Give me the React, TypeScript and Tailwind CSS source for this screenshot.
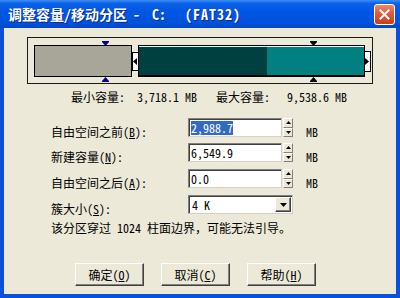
import React from "react";

const FONT = "font-['Noto_Sans_Mono_CJK_SC','Noto_Sans_CJK_SC',monospace]";

function Marker({ down, color, className }: { down: boolean; color: string; className: string }) {
  return (
    <svg width="7" height="5" viewBox="0 0 7 5" className={className}>
      {down ? (
        <>
          <rect x="0" y="0" width="7" height="1" fill={color} />
          <polygon points="0,1 7,1 3.5,5" fill={color} />
        </>
      ) : (
        <>
          <rect x="0" y="4" width="7" height="1" fill={color} />
          <polygon points="0,4 7,4 3.5,0" fill={color} />
        </>
      )}
    </svg>
  );
}

function SpinButtons() {
  return (
    <div className="flex flex-col w-[10px] h-[19px] ml-[1px]">
      {[true, false].map((up, i) => (
        <div
          key={i}
          className="flex-1 flex items-center justify-center bg-[#ECE9D8] border border-t-white border-l-white border-r-[#808080] border-b-[#808080]"
        >
          <svg width="5" height="3" viewBox="0 0 5 3">
            {up ? <polygon points="0,3 5,3 2.5,0" fill="#000" /> : <polygon points="0,0 5,0 2.5,3" fill="#000" />}
          </svg>
        </div>
      ))}
    </div>
  );
}

function Hot({ pre, k, post }: { pre: string; k: string; post: string }) {
  return (
    <span className="whitespace-pre">
      {pre}(<span className="underline underline-offset-1">{k}</span>){post}
    </span>
  );
}

function InputRow({ label, hk, value, selected }: { label: string; hk: string; value: string; selected?: boolean }) {
  return (
    <div className="flex items-start h-[19px]">
      <div className="w-[137px] mt-[7px]">
        <Hot pre={label} k={hk} post=":" />
      </div>
      <div className="w-[94px] h-[19px] bg-white border border-t-[#808080] border-l-[#808080] border-r-[#D4D0C8] border-b-[#D4D0C8] shadow-[inset_1px_1px_0_#404040] flex items-center pl-[2px]">
        <span className={selected ? "bg-[#316AC5] text-white" : ""}>{value}</span>
      </div>
      <SpinButtons />
      <div className="ml-[13px] mt-[7px]">MB</div>
    </div>
  );
}

function Button({ label, hk }: { label: string; hk: string }) {
  return (
    <div className="w-[69px] h-[23px] bg-[#ECE9D8] border border-t-white border-l-white border-r-[#404040] border-b-[#404040] shadow-[inset_-1px_-1px_0_#808080] flex items-center justify-center">
      <Hot pre={label} k={hk} post="" />
    </div>
  );
}

export default function App() {
  return (
    <div className={`w-[400px] h-[298px] flex flex-col bg-[#0B50DC] overflow-hidden ${FONT} text-[12px] leading-[14px] text-black`}>
      {/* Title bar */}
      <div className="h-[28px] shrink-0 flex items-center justify-between pl-[8px] pr-[5px] bg-[linear-gradient(180deg,#3E8EF5_0%,#0B62E6_12%,#0157E4_40%,#0054E3_60%,#0151D9_85%,#0345C4_100%)]">
        <div className="flex items-center text-white font-bold text-[14px] leading-[16px] whitespace-pre [text-shadow:1px_1px_0_#0a2a8a]">
          <span className="w-[125px] shrink-0">调整容量/移动分区</span>
          <span className="w-[19px] shrink-0">-</span>
          <span className="w-[33px] shrink-0">C:</span>
          <span className="shrink-0 tracking-[1px]">(FAT32)</span>
        </div>
        <div className="w-[21px] h-[21px] rounded-[3px] border border-white bg-[linear-gradient(180deg,#EC8A6C_0%,#E05A36_45%,#C7401C_100%)] flex items-center justify-center">
          <svg width="11" height="11" viewBox="0 0 11 11">
            <path d="M1.5 1.5 L9.5 9.5 M9.5 1.5 L1.5 9.5" stroke="#fff" strokeWidth="2" strokeLinecap="square" />
          </svg>
        </div>
      </div>

      {/* Body */}
      <div className="flex-1 mx-[4px] mb-[4px] bg-[#ECE9D8] flex flex-col pt-[9px]">
        {/* Partition frame */}
        <div className="relative ml-[23px] w-[346px] h-[47px] border border-[#1a1a1a]">
          <Marker down color="#00008B" className="absolute left-[74px] top-[3px]" />
          <Marker down color="#000" className="absolute left-[282px] top-[3px]" />
          <Marker down={false} color="#00008B" className="absolute left-[74px] top-[39px]" />
          <Marker down={false} color="#000" className="absolute left-[282px] top-[39px]" />
          <div className="ml-[6px] mt-[7px] h-[32px] flex items-center">
            <div className="w-[98px] h-full border border-black bg-[#A7A699]" />
            <div className="w-[6px] h-[19px] bg-white border border-black border-r-0 flex items-center">
              <svg width="4" height="7" viewBox="0 0 4 7">
                <polygon points="0,3.5 4,0 4,7" fill="#000" />
              </svg>
            </div>
            <div className="w-[227px] h-full border border-black border-b-2 flex">
              <div className="w-[128px] h-full bg-[#004040] border-t border-[#dfe]" />
              <div className="flex-1 h-full bg-[#008080] border-t border-white" />
            </div>
            <div className="w-[6px] h-[21px] bg-white border border-black border-l-0 flex items-center">
              <svg width="4" height="7" viewBox="0 0 4 7">
                <polygon points="0,0 4,3.5 0,7" fill="#000" />
              </svg>
            </div>
          </div>
        </div>

        {/* Min / max line */}
        <div className="mt-[6px] pl-[67px] grid grid-cols-[66px_79px_71px_auto] whitespace-pre">
          <span>最小容量:</span>
          <span>3,718.1 MB</span>
          <span>最大容量:</span>
          <span>9,538.6 MB</span>
        </div>

        {/* Form */}
        <div className="mt-[14px] pl-[47px] flex flex-col">
          <InputRow label="自由空间之前" hk="B" value="2,988.7" selected />
          <div className="h-[6px]" />
          <InputRow label="新建容量" hk="N" value="6,549.9" />
          <div className="h-[7px]" />
          <InputRow label="自由空间之后" hk="A" value="0.0" />
          <div className="h-[7px]" />
          <div className="flex items-start h-[19px]">
            <div className="w-[137px] mt-[7px]">
              <Hot pre="簇大小" k="S" post=":" />
            </div>
            <div className="w-[105px] h-[19px] bg-white border border-t-[#808080] border-l-[#808080] border-r-[#D4D0C8] border-b-[#D4D0C8] shadow-[inset_1px_1px_0_#404040] flex items-center justify-between pl-[3px] pr-[1px]">
              <span className="whitespace-pre">4 K</span>
              <div className="w-[16px] h-[15px] bg-[#ECE9D8] border border-t-white border-l-white border-r-[#404040] border-b-[#404040] shadow-[inset_-1px_-1px_0_#808080] flex items-center justify-center">
                <svg width="7" height="4" viewBox="0 0 7 4">
                  <polygon points="0,0 7,0 3.5,4" fill="#000" />
                </svg>
              </div>
            </div>
          </div>
          <div className="mt-[7px] whitespace-pre">该分区穿过 1024 柱面边界，可能无法引导。</div>
        </div>

        {/* Buttons */}
        <div className="mt-[28px] pl-[71px] flex gap-[17px]">
          <Button label="确定" hk="O" />
          <Button label="取消" hk="C" />
          <Button label="帮助" hk="H" />
        </div>
      </div>
    </div>
  );
}
